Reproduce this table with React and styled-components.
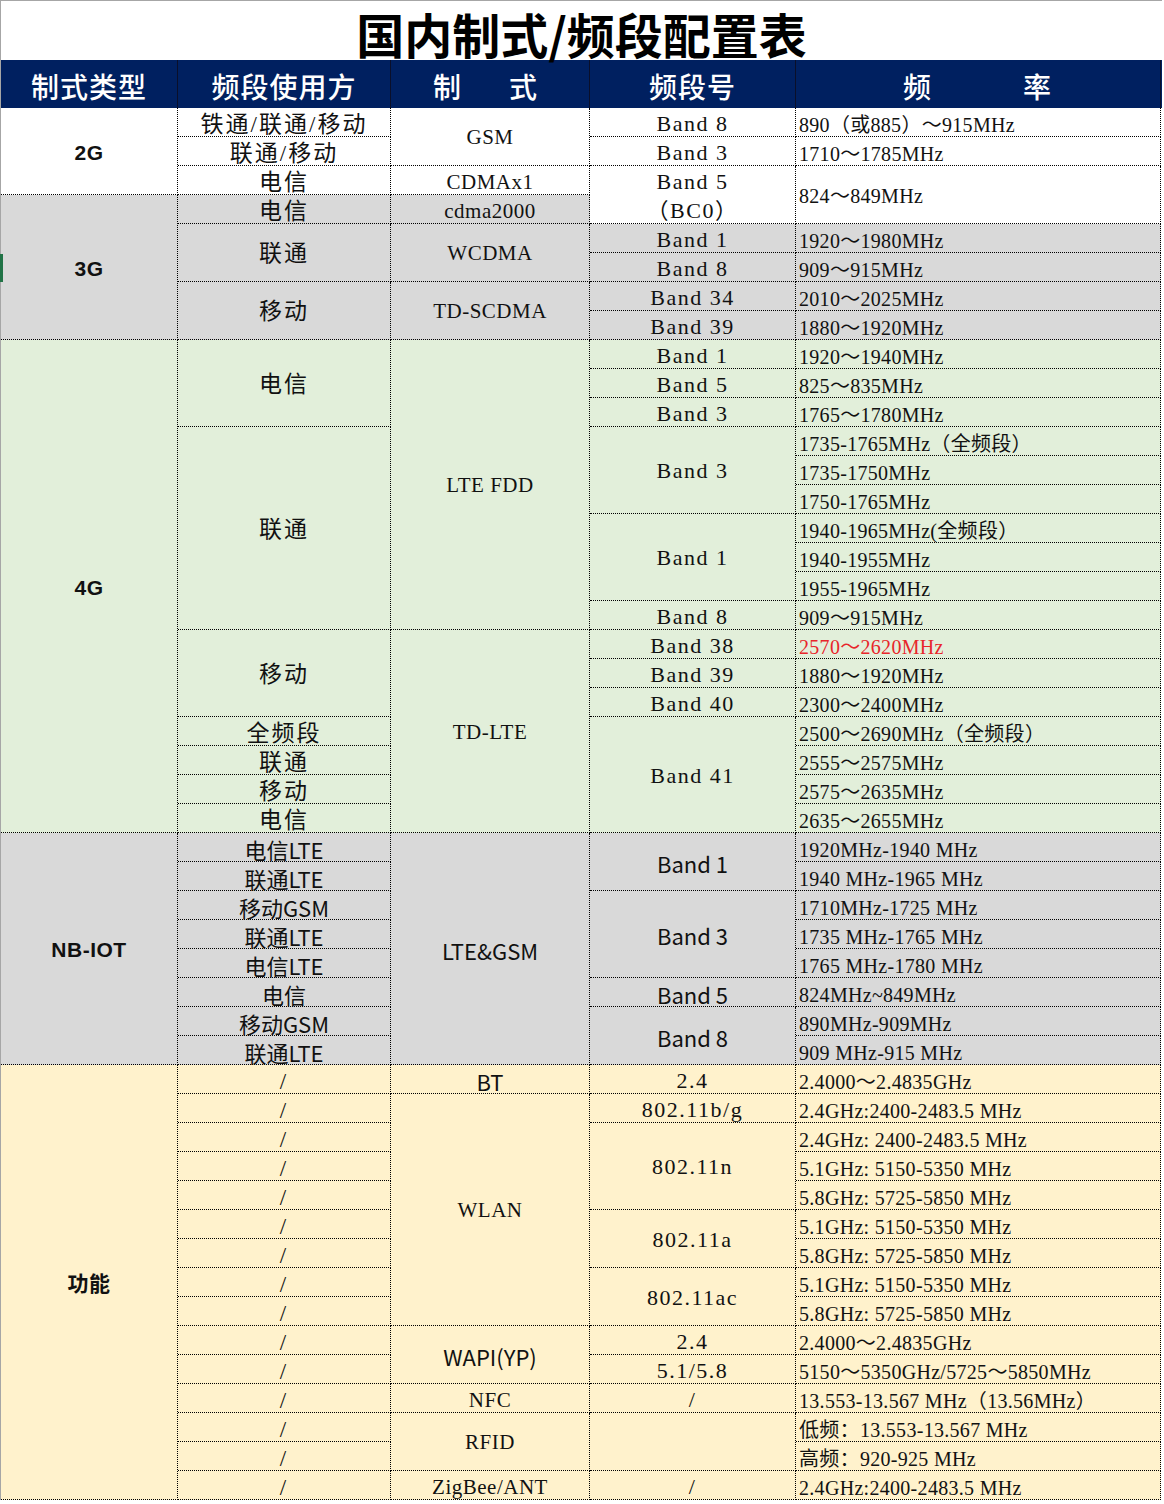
import React from 'react';
import styled, { createGlobalStyle } from 'styled-components';

const SERIF = `"Liberation Serif", "Noto Sans CJK SC", serif`;
const SANS = `"Noto Sans CJK SC", "Noto Sans", sans-serif`;
const BOLD = `"Liberation Sans", "Noto Sans CJK SC", sans-serif`;

const COLS = '177px 213px 199px 206px 365px';
const ROW_H = 29;

const GlobalStyle = createGlobalStyle`
  html, body {
    margin: 0;
    padding: 0;
    background: #ffffff;
  }
  body {
    font-family: ${SANS};
    color: #111;
  }
`;

const Sheet = styled.div`
  position: relative;
  width: 1162px;
  border-left: 1px solid #a6a6a6;
  box-sizing: border-box;
`;

const Title = styled.h1`
  margin: 0;
  height: 60px;
  display: flex;
  align-items: center;
  justify-content: center;
  border-top: 1px solid #a6a6a6;
  box-sizing: border-box;
  font-family: ${SANS};
  font-weight: 700;
  font-size: 48px;
  line-height: 1;
  color: #000;
  padding-top: 4px;
`;

const HeaderRow = styled.div`
  display: grid;
  grid-template-columns: ${COLS};
  height: 48px;
  background: #002060;
`;

const HeaderCell = styled.div`
  display: flex;
  align-items: center;
  justify-content: center;
  border-right: 1px solid #0a0f2a;
  box-sizing: border-box;
  color: #ffffff;
  font-family: ${SANS};
  font-weight: 500;
  font-size: 28px;
  line-height: 1;
  letter-spacing: ${(p) => p.$spacing || '1px'};
  white-space: pre;
  padding-top: 4px;
`;

const Body = styled.div`
  display: grid;
  grid-template-columns: ${COLS};
  grid-auto-rows: ${ROW_H}px;
`;

const FONTS = {
  serif: { family: SERIF, weight: 400 },
  sans: { family: SANS, weight: 400 },
  bold: { family: BOLD, weight: 700 },
};

const Cell = styled.div`
  grid-column: ${(p) => p.$col};
  grid-row: ${(p) => p.$row} / span ${(p) => p.$span};
  display: flex;
  flex-direction: column;
  justify-content: center;
  align-items: ${(p) => (p.$left ? 'flex-start' : 'center')};
  padding: ${(p) => (p.$span === 1 ? '5px' : '3px')} 0 0 ${(p) => (p.$left ? '3px' : '0')};
  box-sizing: border-box;
  background: ${(p) => p.$bg};
  border-right: 1px dotted #000;
  border-bottom: 1px dotted #000;
  font-family: ${(p) => FONTS[p.$font].family};
  font-weight: ${(p) => FONTS[p.$font].weight};
  font-size: ${(p) => p.$size}px;
  letter-spacing: ${(p) => p.$track}px;
  color: ${(p) => p.$color || '#111'};
  line-height: ${(p) => (p.$stack ? `${ROW_H}px` : '1.1')};
  white-space: nowrap;
  overflow: visible;
`;

const RowMarker = styled.div`
  position: absolute;
  left: -1px;
  top: 254px;
  width: 3px;
  height: 28px;
  background: #217346;
`;

const SECTIONS = [
  { from: 1, to: 3, bg: '#ffffff' },
  { from: 4, to: 8, bg: '#d9d9d9' },
  { from: 9, to: 25, bg: '#e2efda' },
  { from: 26, to: 33, bg: '#d9d9d9' },
  { from: 34, to: 48, bg: '#fff2cc' },
];

const bgFor = (row) => SECTIONS.find((s) => row >= s.from && row <= s.to).bg;

// [row, span, text, font, colour]
const typeCol = [
  [1, 3, '2G'],
  [4, 5, '3G'],
  [9, 17, '4G'],
  [26, 8, 'NB-IOT'],
  [34, 15, '功能'],
];

const userCol = [
  [1, 1, '铁通/联通/移动'],
  [2, 1, '联通/移动'],
  [3, 1, '电信'],
  [4, 1, '电信'],
  [5, 2, '联通'],
  [7, 2, '移动'],
  [9, 3, '电信'],
  [12, 7, '联通'],
  [19, 3, '移动'],
  [22, 1, '全频段'],
  [23, 1, '联通'],
  [24, 1, '移动'],
  [25, 1, '电信'],
  [26, 1, '电信LTE', 'sans'],
  [27, 1, '联通LTE', 'sans'],
  [28, 1, '移动GSM', 'sans'],
  [29, 1, '联通LTE', 'sans'],
  [30, 1, '电信LTE', 'sans'],
  [31, 1, '电信', 'sans'],
  [32, 1, '移动GSM', 'sans'],
  [33, 1, '联通LTE', 'sans'],
  ...Array.from({ length: 15 }, (_, i) => [34 + i, 1, '/']),
];

const modeCol = [
  [1, 2, 'GSM'],
  [3, 1, 'CDMAx1'],
  [4, 1, 'cdma2000'],
  [5, 2, 'WCDMA'],
  [7, 2, 'TD-SCDMA'],
  [9, 10, 'LTE FDD'],
  [19, 7, 'TD-LTE'],
  [26, 8, 'LTE&GSM', 'sans'],
  [34, 1, 'BT', 'sans'],
  [35, 8, 'WLAN'],
  [43, 2, 'WAPI(YP)', 'sans'],
  [45, 1, 'NFC'],
  [46, 2, 'RFID'],
  [48, 1, 'ZigBee/ANT'],
];

const bandCol = [
  [1, 1, 'Band 8'],
  [2, 1, 'Band 3'],
  [3, 2, ['Band 5', '（BC0）']],
  [5, 1, 'Band 1'],
  [6, 1, 'Band 8'],
  [7, 1, 'Band 34'],
  [8, 1, 'Band 39'],
  [9, 1, 'Band 1'],
  [10, 1, 'Band 5'],
  [11, 1, 'Band 3'],
  [12, 3, 'Band 3'],
  [15, 3, 'Band 1'],
  [18, 1, 'Band 8'],
  [19, 1, 'Band 38'],
  [20, 1, 'Band 39'],
  [21, 1, 'Band 40'],
  [22, 4, 'Band 41'],
  [26, 2, 'Band 1', 'sans'],
  [28, 3, 'Band 3', 'sans'],
  [31, 1, 'Band 5', 'sans'],
  [32, 2, 'Band 8', 'sans'],
  [34, 1, '2.4'],
  [35, 1, '802.11b/g'],
  [36, 3, '802.11n'],
  [39, 2, '802.11a'],
  [41, 2, '802.11ac'],
  [43, 1, '2.4'],
  [44, 1, '5.1/5.8'],
  [45, 1, '/'],
  [46, 2, ''],
  [48, 1, '/'],
];

const freqCol = [
  [1, 1, '890（或885）～915MHz'],
  [2, 1, '1710～1785MHz'],
  [3, 2, '824～849MHz'],
  [5, 1, '1920～1980MHz'],
  [6, 1, '909～915MHz'],
  [7, 1, '2010～2025MHz'],
  [8, 1, '1880～1920MHz'],
  [9, 1, '1920～1940MHz'],
  [10, 1, '825～835MHz'],
  [11, 1, '1765～1780MHz'],
  [12, 1, '1735-1765MHz（全频段）'],
  [13, 1, '1735-1750MHz'],
  [14, 1, '1750-1765MHz'],
  [15, 1, '1940-1965MHz(全频段）'],
  [16, 1, '1940-1955MHz'],
  [17, 1, '1955-1965MHz'],
  [18, 1, '909～915MHz'],
  [19, 1, '2570～2620MHz', 'serif', '#e8262b'],
  [20, 1, '1880～1920MHz'],
  [21, 1, '2300～2400MHz'],
  [22, 1, '2500～2690MHz（全频段）'],
  [23, 1, '2555～2575MHz'],
  [24, 1, '2575～2635MHz'],
  [25, 1, '2635～2655MHz'],
  [26, 1, '1920MHz-1940 MHz'],
  [27, 1, '1940 MHz-1965 MHz'],
  [28, 1, '1710MHz-1725 MHz'],
  [29, 1, '1735 MHz-1765 MHz'],
  [30, 1, '1765 MHz-1780 MHz'],
  [31, 1, '824MHz~849MHz'],
  [32, 1, '890MHz-909MHz'],
  [33, 1, '909 MHz-915 MHz'],
  [34, 1, '2.4000～2.4835GHz'],
  [35, 1, '2.4GHz:2400-2483.5 MHz'],
  [36, 1, '2.4GHz: 2400-2483.5 MHz'],
  [37, 1, '5.1GHz: 5150-5350 MHz'],
  [38, 1, '5.8GHz: 5725-5850 MHz'],
  [39, 1, '5.1GHz: 5150-5350 MHz'],
  [40, 1, '5.8GHz: 5725-5850 MHz'],
  [41, 1, '5.1GHz: 5150-5350 MHz'],
  [42, 1, '5.8GHz: 5725-5850 MHz'],
  [43, 1, '2.4000～2.4835GHz'],
  [44, 1, '5150～5350GHz/5725～5850MHz'],
  [45, 1, '13.553-13.567 MHz（13.56MHz）'],
  [46, 1, '低频：13.553-13.567 MHz'],
  [47, 1, '高频：920-925 MHz'],
  [48, 1, '2.4GHz:2400-2483.5 MHz'],
];

const COLUMNS = [
  { col: 1, items: typeCol, font: 'bold', size: 21, track: 0.5 },
  { col: 2, items: userCol, font: 'serif', size: 23, track: 2 },
  { col: 3, items: modeCol, font: 'serif', size: 21, track: 0.5 },
  { col: 4, items: bandCol, font: 'serif', size: 22, track: 1.5 },
  { col: 5, items: freqCol, font: 'serif', size: 20, track: 0.3, left: true },
];

const HEADERS = [
  { label: '制式类型' },
  { label: '频段使用方' },
  { label: '制　式', spacing: '10px' },
  { label: '频段号' },
  { label: '频　　　率', spacing: '2px' },
];

export default function App() {
  return (
    <>
      <GlobalStyle />
      <Sheet>
        <Title>国内制式/频段配置表</Title>
        <HeaderRow>
          {HEADERS.map((h) => (
            <HeaderCell key={h.label} $spacing={h.spacing}>
              {h.label}
            </HeaderCell>
          ))}
        </HeaderRow>
        <Body>
          {COLUMNS.map(({ col, items, font, size, track, left }) =>
            items.map(([row, span, text, f, color]) => {
              const isSans = f === 'sans';
              return (
                <Cell
                  key={`${col}-${row}`}
                  $col={col}
                  $row={row}
                  $span={span}
                  $bg={bgFor(row)}
                  $font={f || font}
                  $size={isSans ? 22 : size}
                  $track={isSans ? 0 : track}
                  $left={left}
                  $color={color}
                  $stack={Array.isArray(text)}
                >
                  {Array.isArray(text) ? text.map((t) => <span key={t}>{t}</span>) : text}
                </Cell>
              );
            })
          )}
        </Body>
        <RowMarker />
      </Sheet>
    </>
  );
}
